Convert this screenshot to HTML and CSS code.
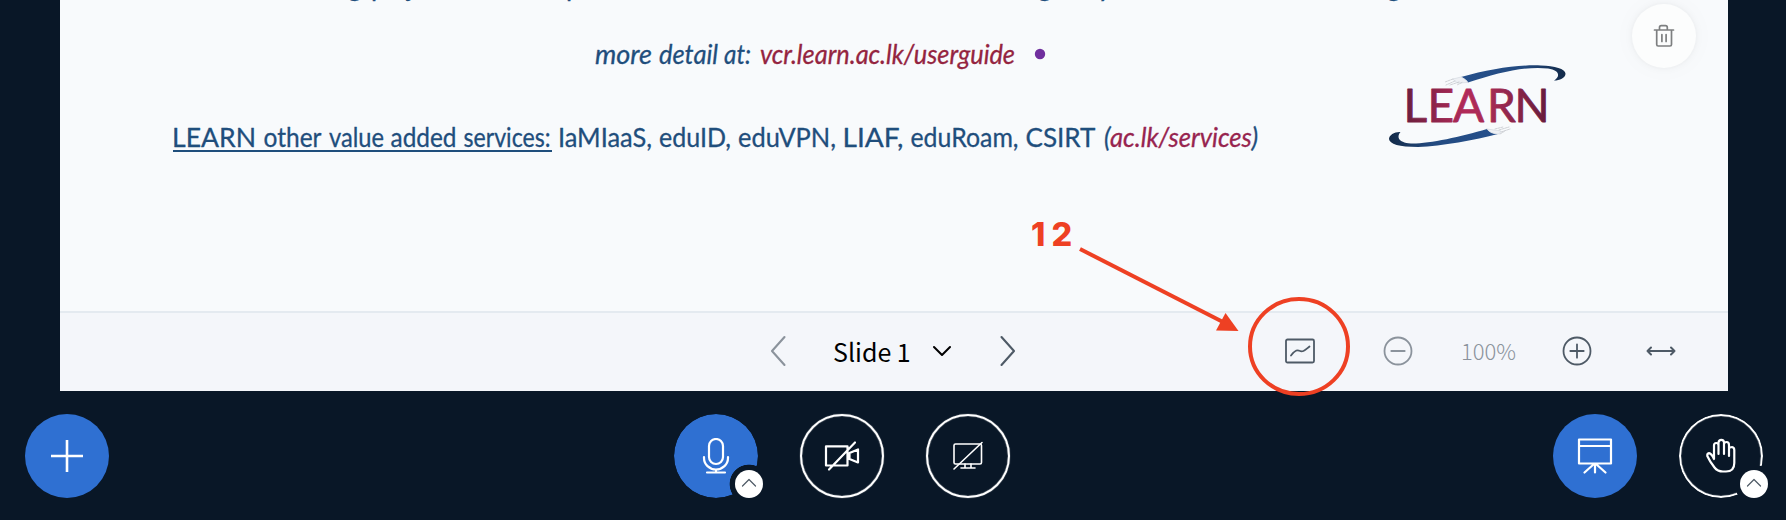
FILE: index.html
```html
<!DOCTYPE html>
<html lang="en">
<head>
<meta charset="utf-8">
<title>Presentation</title>
<link rel="stylesheet" href="styles.css">
</head>
<body>
<main class="presentation">
  <section class="slide">
    <svg class="slide-canvas" viewBox="60 0 1668 311" width="1668" height="311">
      <defs>
        <linearGradient id="wordmark" gradientUnits="userSpaceOnUse" x1="1407" y1="0" x2="1547" y2="0">
          <stop offset="0" stop-color="#6d1f3e"/><stop offset=".42" stop-color="#b22a59"/><stop offset=".6" stop-color="#a52b54"/><stop offset="1" stop-color="#671c3b"/>
        </linearGradient>
        <linearGradient id="swoosh-top" gradientUnits="userSpaceOnUse" x1="1460" y1="0" x2="1566" y2="0">
          <stop offset="0" stop-color="#26508c"/><stop offset=".6" stop-color="#234a80"/><stop offset="1" stop-color="#132a48"/>
        </linearGradient>
        <linearGradient id="swoosh-bottom" gradientUnits="userSpaceOnUse" x1="1389" y1="0" x2="1495" y2="0">
          <stop offset="0" stop-color="#132a48"/><stop offset=".4" stop-color="#234a80"/><stop offset="1" stop-color="#26508c"/>
        </linearGradient>
      </defs>
      <g class="slide-text">
        <text y="-4" x="348 371 407 566 1038 1098 1387">gpjpgyg</text>
        <g class="italic">
          <text x="595" y="64" textLength="57" lengthAdjust="spacingAndGlyphs">more</text>
          <text x="659" y="64" textLength="59" lengthAdjust="spacingAndGlyphs">detail</text>
          <text x="724" y="64" textLength="27" lengthAdjust="spacingAndGlyphs">at:</text>
          <text class="link" x="760" y="64" textLength="255" lengthAdjust="spacingAndGlyphs">vcr.learn.ac.lk/userguide</text>
        </g>
        <circle class="bullet" cx="1040" cy="54" r="5.2"/>
        <text x="172" y="147" textLength="84" lengthAdjust="spacingAndGlyphs">LEARN</text>
        <text x="263.500" y="147" textLength="58" lengthAdjust="spacingAndGlyphs">other</text>
        <text x="329" y="147" textLength="55" lengthAdjust="spacingAndGlyphs">value</text>
        <text x="390.500" y="147" textLength="66" lengthAdjust="spacingAndGlyphs">added</text>
        <text x="463.500" y="147" textLength="87" lengthAdjust="spacingAndGlyphs">services:</text>
        <path class="underline" d="M173 151H552"/>
        <text x="558" y="147" textLength="94" lengthAdjust="spacingAndGlyphs">IaMIaaS,</text>
        <text x="659" y="147" textLength="72" lengthAdjust="spacingAndGlyphs">eduID,</text>
        <text x="738" y="147" textLength="98" lengthAdjust="spacingAndGlyphs">eduVPN,</text>
        <text x="842.500" y="147" textLength="61" lengthAdjust="spacingAndGlyphs">LIAF,</text>
        <text x="910.500" y="147" textLength="108" lengthAdjust="spacingAndGlyphs">eduRoam,</text>
        <text x="1025.500" y="147" textLength="70" lengthAdjust="spacingAndGlyphs">CSIRT</text>
        <text class="italic" x="1104" y="147" textLength="154" lengthAdjust="spacingAndGlyphs">(<tspan class="link2">ac.lk/services</tspan>)</text>
      </g>
      <g>
        <path fill="url(#swoosh-top)" d="M1461 77C1490 69 1518 64.5 1541 65.5C1555 66 1566 69 1565.500 74C1565 78 1560 80.500 1554 80.500C1561 76 1559 70 1548 68.500C1524 66 1498 73 1468 82.500Q1466 79 1461 77Z"/>
        <path class="fray" d="M1453 79L1461 77Q1466 79 1468 82.500L1458 83Z"/>
        <path class="wires" d="M1453 79L1445 82M1455 81L1446 85M1459 82L1450 85M1462 82.500L1457 85"/>
        <path fill="url(#swoosh-bottom)" d="M1487 129C1460 137 1428 144 1411 143.500C1397 142.500 1397 136 1400.500 132C1395 131.500 1389 135 1389 139C1389.500 144 1399 147 1418 147C1442 146 1475 140 1498 134Q1490 134 1487 129Z"/>
        <path class="fray" d="M1487 129L1501 131L1499 134Q1490 134 1487 129Z"/>
        <path class="wires" d="M1495 129L1503 127M1499 130L1509 127M1501 132L1510 129M1500 134L1505 131"/>
        <text class="wordmark" y="122" x="1403.500 1427.500 1453 1487 1514.500">LEARN</text>
      </g>
    </svg>
    <button class="trash" aria-label="Delete">
      <svg width="22" height="24" viewBox="0 0 22 24"><path d="M1.500 6H20.500M6.500 6V3.500Q6.500 1.700 8.300 1.700H12.500Q14.300 1.700 14.300 3.500V6M3.700 6V20.500Q3.700 22 5.200 22H17Q18.500 22 18.500 20.500V6M8.900 10.500V17.500M13.100 10.500V17.500"/></svg>
    </button>
  </section>
  <nav class="toolbar">
    <div class="pager">
      <svg class="faded" width="16" height="32" viewBox="0 0 16 32"><path d="M14.500 2L2 16L14.500 30"/></svg>
      <span class="slide-name">Slide 1</span>
      <svg class="black" width="18" height="12" viewBox="0 0 18 12"><path d="M1 2L9 10L17 2"/></svg>
      <svg class="next" width="16" height="32" viewBox="0 0 16 32"><path d="M1.500 2L14 16L1.500 30"/></svg>
    </div>
    <div class="zoom">
      <svg width="30" height="26" viewBox="0 0 30 26"><rect x="1" y="1.500" width="28" height="23" rx="1.500"/><path d="M6 17.500C10 12 12 11.500 14.500 12.800C18 14.500 20 12 24.500 8.500"/></svg>
      <svg class="faded minus" width="30" height="30" viewBox="0 0 30 30"><circle cx="15" cy="15" r="13.500"/><path d="M8.300 15H21.700"/></svg>
      <span class="percent">100%</span>
      <svg width="30" height="30" viewBox="0 0 30 30"><circle cx="15" cy="15" r="13.500"/><path d="M8.300 15H21.700M15 8.300V21.700"/></svg>
      <svg class="fit" width="30" height="12" viewBox="0 0 30 12"><path d="M1.500 6H28.500M5 2.500L1.500 6L5 9.500M25 2.500L28.500 6L25 9.500"/></svg>
    </div>
  </nav>
</main>
<footer class="actions">
  <button class="round primary" aria-label="Actions"><svg width="36" height="36" viewBox="0 0 36 36"><path class="bold" d="M18 2V34M2 18H34"/></svg></button>
  <div class="media">
    <div class="slot">
      <button class="round primary notched" aria-label="Microphone"><svg width="36" height="36" viewBox="0 0 36 36"><rect x="11" y="1" width="14" height="25" rx="7"/><path d="M6 19V20A12 11.500 0 0 0 30 20V19M18 31.500V34.500M9 34.500H27"/></svg></button>
      <span class="badge"><svg width="16" height="9" viewBox="0 0 16 9"><path d="M1.500 8L8 1.500L14.500 8"/></svg></span>
    </div>
    <button class="round outline" aria-label="Camera"><svg width="36" height="36" viewBox="0 0 36 36"><path d="M2 8.300H23.500V27.500H2ZM25.500 15L34 11.500V24.500L25.500 21ZM5 31.500L31 4.500"/></svg></button>
    <button class="round outline" aria-label="Screen"><svg class="thin" width="36" height="36" viewBox="0 0 36 36"><rect x="4" y="6" width="27.500" height="20" rx="1.500"/><path d="M15 26V30M21 26V30M11 30H25M4 31L32 4.500"/></svg></button>
  </div>
  <div class="side">
    <button class="round primary" aria-label="Presentation"><svg width="36" height="36" viewBox="0 0 36 36"><path d="M2 1.500H34V25.500H2ZM2 8H34M17 26L7.500 34.500M18 26V34.500M19 26L28.500 34.500"/></svg></button>
    <div class="slot">
      <button class="round outline notched" aria-label="Raise hand"><svg width="36" height="36" viewBox="0 0 36 36"><path d="M11 21V7.500Q11 5 13.200 5Q15.500 5 15.500 7.500V16M15.500 7.500V4.500Q15.800 1.800 18.300 1.800Q21 1.800 21 4.500V16M21 6Q21.500 4 23.500 4Q26 4 26 7V18M26 10.500Q27 9 29 9Q31.300 9.500 31.300 12V25Q31.300 33.500 23 33.500H20Q14.500 33.500 11.500 29.500Q6.500 23 4.300 18Q4 15.500 6 15.200Q8.500 15.500 11 21"/></svg></button>
      <span class="badge right"><svg width="16" height="9" viewBox="0 0 16 9"><path d="M1.500 8L8 1.500L14.500 8"/></svg></span>
    </div>
  </div>
</footer>
<svg class="annotation" width="1786" height="520" viewBox="0 0 1786 520">
  <text x="1031 1051.500" y="246">12</text>
  <path d="M1080 249L1222 321.500"/>
  <path class="head" d="M1225.500 313L1238.500 331L1216 330.500Z"/>
  <ellipse cx="1299" cy="346.500" rx="49" ry="47.500"/>
</svg>
</body>
</html>
```
FILE: styles.css
```css
* { box-sizing: border-box; }
body {
  margin: 0;
  width: 1786px;
  height: 520px;
  overflow: hidden;
  position: relative;
  background: #091727;
  font-family: "Noto Sans CJK SC", "Noto Sans", sans-serif;
}
button { border: 0; padding: 0; font: inherit; }
svg { display: block; flex: none; fill: none; stroke-linecap: round; stroke-linejoin: round; }
.presentation { margin: 0 58px 0 60px; height: 391px; }
.slide { position: relative; height: 311px; background: #f8fafc; overflow: hidden; }
.slide-text { font: 26.5px Lato, sans-serif; fill: #1f4e7c; stroke: none; }
.slide-text text { stroke: #1f4e7c; stroke-width: .3px; }
.italic { font-style: italic; }
.slide-text .link { fill: #942440; stroke: #942440; }
.link2 { fill: #97244f; stroke: #97244f; }
.bullet { fill: #702f9e; }
.underline { stroke: #1f4e7c; stroke-width: 2px; stroke-linecap: butt; }
.wordmark { font: 400 46px Lato, sans-serif; fill: url(#wordmark); stroke: url(#wordmark); stroke-width: .8px; }
.fray { fill: #eef0f4; stroke: #c9ced8; stroke-width: .5px; }
.wires { stroke: #c4c6cc; stroke-width: .8px; stroke-dasharray: 2 1; }
.trash {
  position: absolute;
  top: 4px;
  right: 32px;
  width: 64px;
  height: 64px;
  border-radius: 50%;
  background: #fcfdfd;
  box-shadow: 0 0 6px rgba(0,0,0,.05), 0 0 24px rgba(0,0,0,.03);
  display: grid;
  place-items: center;
}
.trash svg { stroke: #7d7f80; stroke-width: 1.7px; }
.toolbar {
  height: 80px;
  border-top: 2px solid #e4eaf0;
  background: #f4f6fa;
  display: flex;
  align-items: center;
  justify-content: space-between;
  padding: 0 52px 2px 710px;
}
.toolbar svg { stroke: #4e5a66; stroke-width: 1.8px; }
.toolbar .faded { stroke: #8b939c; }
.toolbar .black { stroke: #000; stroke-width: 2px; margin-left: 22px; }
.pager, .zoom { display: flex; align-items: center; }
.pager .faded, .toolbar .next { stroke-width: 2.1px; }
.slide-name { margin-left: 47px; width: 78px; font-size: 25px; line-height: 36px; white-space: nowrap; color: #000; }
.next { margin-left: 49px; }
.minus { margin-left: 68px; }
.percent { width: 54px; margin: 0 47px 0 48px; font-size: 22px; font-weight: 300; line-height: 32px; padding-bottom: 2px; text-align: center; color: #8b939c; white-space: nowrap; }
.fit { margin-left: 54px; }
.toolbar .fit { stroke-width: 2px; }
.actions {
  height: 129px;
  padding: 23px 23px 0 25px;
  display: grid;
  grid-template-columns: 649px 1fr auto;
  align-items: start;
}
.media, .side { display: flex; gap: 42px; }
.slot { position: relative; }
.round { width: 84px; height: 84px; border-radius: 50%; display: grid; place-items: center; }
.round svg { stroke: #fff; stroke-width: 2.2px; }
.round svg.thin { stroke-width: 1.6px; }
.bold { stroke-width: 2.6px; stroke-linecap: butt; }
.primary { background: #2f70d2; }
.outline { background: transparent; border: 2.5px solid #fff; box-shadow: 0 0 1px #fff, inset 0 0 1px #fff; }
.notched { -webkit-mask: radial-gradient(circle at 75px 70px, transparent 19px, #000 19.7px) border-box; mask: radial-gradient(circle at 75px 70px, transparent 19px, #000 19.7px) border-box; }
.badge { position: absolute; left: 61px; top: 56px; width: 28px; height: 28px; border-radius: 50%; background: #fff; display: grid; place-items: center; }
.badge svg { stroke: #4e5a66; stroke-width: 1.2px; margin-top: -3px; }
.annotation { position: absolute; left: 0; top: 0; pointer-events: none; stroke: #ee4023; stroke-width: 4px; stroke-linecap: butt; }
.annotation text { font: 800 32.5px Inter, sans-serif; fill: #ee4023; stroke: none; }
.annotation .head { fill: #ee4023; stroke: none; }
```
